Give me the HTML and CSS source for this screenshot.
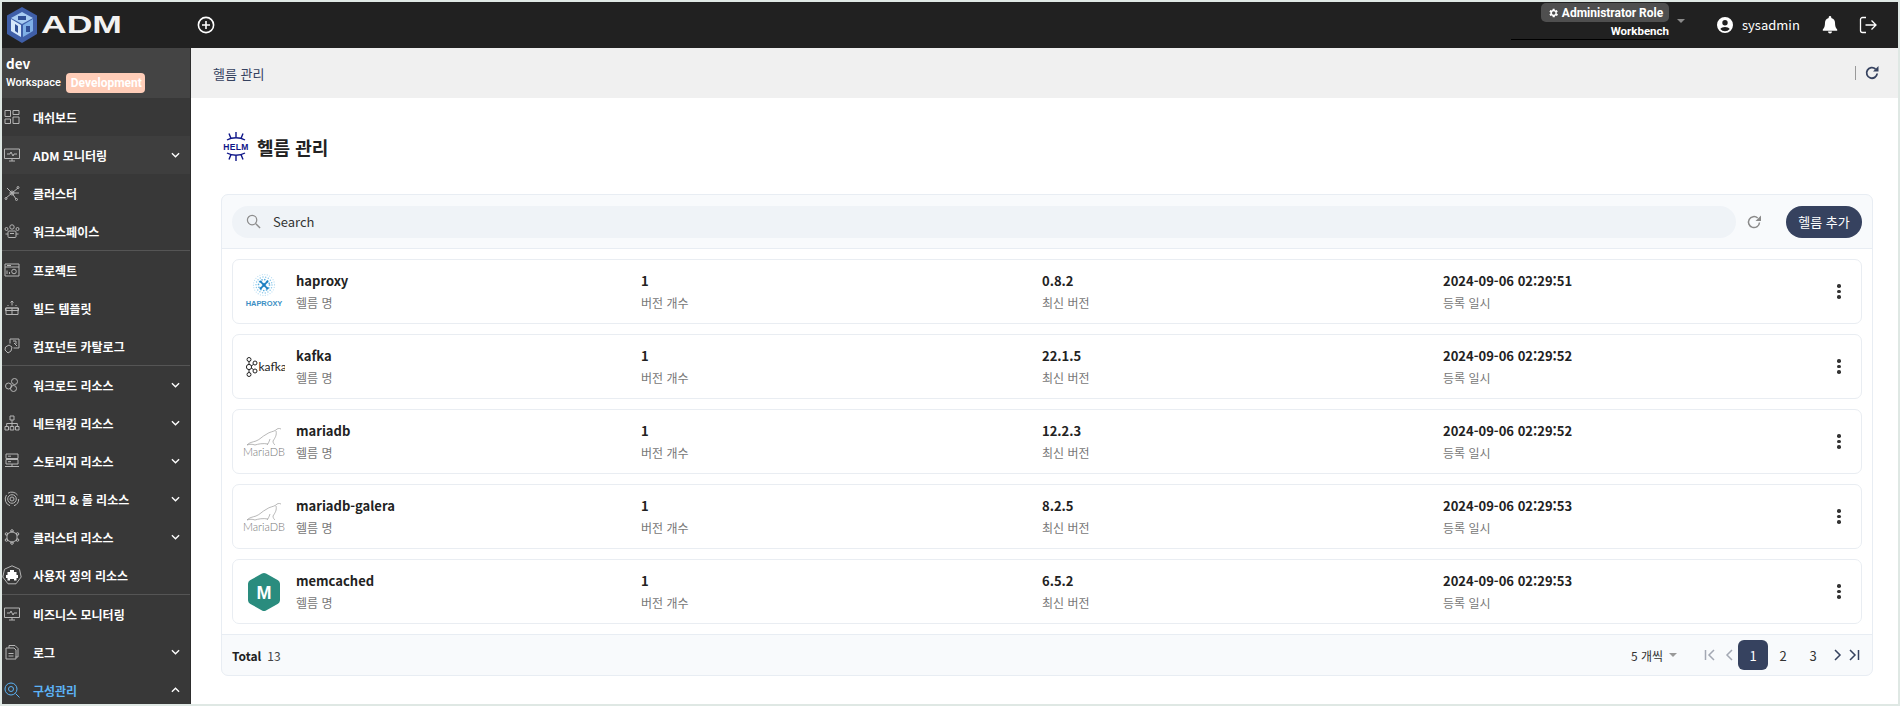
FILE: index.html
```html
<!DOCTYPE html>
<html lang="ko">
<head>
<meta charset="utf-8">
<title>헬름 관리</title>
<link rel="stylesheet" href="styles.css">
</head>
<body>
<div class="app">
  <header class="topbar">
    <div class="brand">
      <svg class="brand-hex" viewBox="0 0 32 36" width="32" height="36">
        <polygon points="16,0 31,8.5 31,27 16,36 1,27 1,8.5" fill="#3f5fa8"/>
        <polygon points="16,5 27,11 16,17 5,11" fill="#a9cdf2"/>
        <polygon points="5,12 15,18 15,30 5,24" fill="#d6e8fb"/>
        <polygon points="27,12 17,18 17,30 27,24" fill="#7fb0e6"/>
        <path d="M12 9h8v4h-8zM9 17v7l3 2v-7zM20 19h4v6h-4z" fill="#2f4f96"/>
      </svg>
      <svg class="brand-word" viewBox="0 0 82 20" width="82" height="20"><text x="0" y="17.5" textLength="81" lengthAdjust="spacingAndGlyphs" class="brand-text">ADM</text></svg>
    </div>
    <svg class="plus" viewBox="0 0 18 18" width="18" height="18"><circle cx="9" cy="9" r="7.6" fill="none" stroke="#fff" stroke-width="1.6"/><path d="M9 5v8M5 9h8" stroke="#fff" stroke-width="1.6"/></svg>
    <div class="top-right">
      <div class="role">
        <div class="role-pill">
          <svg viewBox="0 0 24 24" width="12" height="12"><path fill="#fff" d="M19.4 13a7.5 7.5 0 0 0 0-2l2.1-1.6-2-3.4-2.5 1a7.400 7.400 0 0 0-1.700-1L15.400 3.400h-4l-.4 2.600a7.400 7.400 0 0 0-1.700 1l-2.500-1-2 3.400L6.900 11a7.500 7.500 0 0 0 0 2l-2.100 1.600 2 3.400 2.500-1a7.400 7.400 0 0 0 1.700 1l.4 2.600h4l.4-2.600a7.400 7.400 0 0 0 1.700-1l2.500 1 2-3.400zM13.400 15.500a3.500 3.500 0 1 1 0-7 3.500 3.500 0 0 1 0 7z"/></svg>
          <span>Administrator Role</span>
        </div>
        <div class="role-name">Workbench</div>
      </div>
      <span class="role-caret"></span>
      <svg class="user-ico" viewBox="0 0 16 16" width="16" height="16"><path fill="#fff" fill-rule="evenodd" d="M8 0a8 8 0 1 0 0 16A8 8 0 0 0 8 0zm0 3a2.700 2.700 0 1 1 0 5.400A2.700 2.700 0 0 1 8 3zm0 11.200a6.200 6.200 0 0 1-4.700-2.200C3.900 10.700 6 10 8 10s4.100.7 4.700 2a6.200 6.200 0 0 1-4.700 2.200z"/></svg>
      <span class="user-name">sysadmin</span>
      <svg class="bell" viewBox="0 0 16 18" width="16" height="18"><path fill="#fff" d="M8 0a1.300 1.300 0 0 0-1.300 1.300v.6A5 5 0 0 0 3 6.800c0 3.600-.8 5.300-2.200 6.700v1.300h14.400v-1.300C13.800 12.100 13 10.400 13 6.800a5 5 0 0 0-3.700-4.900v-.6A1.300 1.300 0 0 0 8 0zM6 15.600a2 2 0 0 0 4 0z"/></svg>
      <svg class="logout" viewBox="0 0 20 20" width="20" height="20"><path d="M8 2.500H4.500a2 2 0 0 0-2 2v11a2 2 0 0 0 2 2H8M7.500 10H18M13.500 5.500 18 10l-4.500 4.500" fill="none" stroke="#fff" stroke-width="1.300"/></svg>
    </div>
  </header>

  <div class="body">
    <aside class="sidebar">
      <div class="workspace">
        <div class="ws-name">dev</div>
        <div class="ws-line"><span>Workspace</span><span class="ws-badge">Development</span></div>
      </div>
      <nav class="nav">
        <a class="nav-item"><svg class="nav-ico" viewBox="0 0 16 16"><path d="M1 1.500h5.500v6H1zM1 10h5.500v4.500H1zM9 1.500h6v4H9zM9 8h6v6.500H9z"/></svg><span>대쉬보드</span></a>
        <a class="nav-item is-open"><svg class="nav-ico" viewBox="0 0 16 16"><path d="M.5 2h15v9.500H.5zM5 14h6M8 11.500V14M3 7h3l1-2 2 4 1-2h3"/></svg><span>ADM 모니터링</span><svg class="chev" viewBox="0 0 10 6"><path d="M1 1l4 4 4-4"/></svg></a>
        <a class="nav-item"><svg class="nav-ico" viewBox="0 0 16 16"><path d="M8 8 3 3M8 8l6-5M8 8 2 13M8 8l4 6M8 8h7"/><circle cx="8" cy="8" r="2"/><circle cx="14" cy="2.500" r="1"/><circle cx="2" cy="13.500" r="1"/><circle cx="12.500" cy="14.500" r="1"/></svg><span>클러스터</span></a>
        <a class="nav-item"><svg class="nav-ico" viewBox="0 0 16 16"><rect x="4" y="8" width="8" height="6.500" rx="1"/><circle cx="8" cy="4" r="2.200"/><circle cx="2.500" cy="6" r="1.500"/><circle cx="13.500" cy="6" r="1.500"/><path d="M4 11H1.500M12 11h2.500M6 10.500h4"/></svg><span>워크스페이스</span></a>
        <div class="nav-sep"></div>
        <a class="nav-item"><svg class="nav-ico" viewBox="0 0 16 16"><path d="M1 2h14v12H1zM1 5h14M3 12V8.500M5.500 12V10"/><circle cx="10" cy="9.500" r="2.300"/><path d="M3 3.500h4"/></svg><span>프로젝트</span></a>
        <a class="nav-item"><svg class="nav-ico" viewBox="0 0 16 16"><path d="M2 8h12v6.500H2zM1.500 8h13v2.500h-13zM8 8v6.500M8 1v4.500M6.500 2.500 8 1l1.500 1.500M4 5v1M12 5v1"/></svg><span>빌드 템플릿</span></a>
        <a class="nav-item"><svg class="nav-ico" viewBox="0 0 16 16"><path d="M6 1h9v9H9.500M6 1v4.500M1.500 9 5 7l3 2-1 4-3 2-3-3zM9 3h3v3"/><path d="M10 5l3 3"/></svg><span>컴포넌트 카탈로그</span></a>
        <div class="nav-sep"></div>
        <a class="nav-item"><svg class="nav-ico" viewBox="0 0 16 16"><circle cx="10.500" cy="4.500" r="3"/><circle cx="4.500" cy="9" r="3"/><circle cx="9.500" cy="11.500" r="3"/></svg><span>워크로드 리소스</span><svg class="chev" viewBox="0 0 10 6"><path d="M1 1l4 4 4-4"/></svg></a>
        <a class="nav-item"><svg class="nav-ico" viewBox="0 0 16 16"><path d="M6 1h4v4H6zM1 11.500h3.500V15H1zM6.200 11.500h3.600V15H6.200zM11.500 11.500H15V15h-3.500zM8 5v6.500M2.700 11.500V8.500h10.600v3"/></svg><span>네트워킹 리소스</span><svg class="chev" viewBox="0 0 10 6"><path d="M1 1l4 4 4-4"/></svg></a>
        <a class="nav-item"><svg class="nav-ico" viewBox="0 0 16 16"><path d="M2 1h12v4.500H2zM2 6.500h12V11H2zM8 11v2.500M1 13.500h14M4 3.200h3M4 8.700h3"/></svg><span>스토리지 리소스</span><svg class="chev" viewBox="0 0 10 6"><path d="M1 1l4 4 4-4"/></svg></a>
        <a class="nav-item"><svg class="nav-ico" viewBox="0 0 16 16"><circle cx="8" cy="8" r="2"/><circle cx="8" cy="8" r="4.300"/><path d="M2.500 4A7 7 0 0 0 6 14.700M13.500 4A7 7 0 0 0 4 2.200M14.700 8A7 7 0 0 1 10 14.700"/></svg><span>컨피그 &amp; 롤 리소스</span><svg class="chev" viewBox="0 0 10 6"><path d="M1 1l4 4 4-4"/></svg></a>
        <a class="nav-item"><svg class="nav-ico" viewBox="0 0 16 16"><path d="M8 2.500 13 5v6l-5 2.500L3 11V5z"/><circle cx="8" cy="2" r="1.300"/><circle cx="13.500" cy="5" r="1.300"/><circle cx="13.500" cy="11" r="1.300"/><circle cx="8" cy="14" r="1.300"/><circle cx="2.500" cy="11" r="1.300"/><circle cx="2.500" cy="5" r="1.300"/></svg><span>클러스터 리소스</span><svg class="chev" viewBox="0 0 10 6"><path d="M1 1l4 4 4-4"/></svg></a>
        <a class="nav-item"><svg class="nav-ico nav-ico-lg" viewBox="0 0 20 20"><path d="M10 .8 17.500 4.200 19.200 12 14 18.800H6L.8 12 2.500 4.200z"/><path class="solid" d="M8 5h4v2h2.500v3H16v3h-1.500v2.500H12V14H8v1.500H5.500V13H4v-3h1.500V7H8z"/></svg><span>사용자 정의 리소스</span></a>
        <div class="nav-sep"></div>
        <a class="nav-item"><svg class="nav-ico" viewBox="0 0 16 16"><path d="M.5 2h15v9.500H.5zM5 14h6M8 11.500V14M3 7h3l1-2 2 4 1-2h3"/></svg><span>비즈니스 모니터링</span></a>
        <a class="nav-item"><svg class="nav-ico" viewBox="0 0 16 16"><path d="M5 4V1.500h6L14 4.500V13h-2.500M2 4h8l2 2v9H2zM4.500 9.500h5M4.500 12h5"/></svg><span>로그</span><svg class="chev" viewBox="0 0 10 6"><path d="M1 1l4 4 4-4"/></svg></a>
        <a class="nav-item is-active"><svg class="nav-ico" viewBox="0 0 16 16"><circle cx="7" cy="7" r="6"/><circle cx="7" cy="7" r="2.500"/><path d="m11.500 11.500 4 4"/></svg><span>구성관리</span><svg class="chev" viewBox="0 0 10 6"><path d="M1 5l4-4 4 4"/></svg></a>
      </nav>
    </aside>

    <main class="main">
      <div class="subbar">
        <span class="crumb">헬름 관리</span>
        <div class="subbar-actions">
          <span class="vline"></span>
          <svg class="reload-dark" viewBox="0 0 16 16" width="16" height="16"><path d="M13.200 8.500A5.300 5.300 0 1 1 11.500 4" fill="none" stroke="#36425f" stroke-width="1.800"/><path d="M14.500 1v5.500H9z" fill="#36425f"/></svg>
        </div>
      </div>

      <div class="page">
        <div class="title-row">
          <svg class="helm" viewBox="0 0 28 31" width="28" height="31">
            <g fill="none" stroke="#0f1689" stroke-width="1.400"><path d="M5 9c5-3 13-3 18 0M14 1v5M7 2.500l2 5M21 2.500l-2 5M5 22c5 3 13 3 18 0M14 25v5M7 28.500l2-5M21 28.500l-2-5"/></g>
            <text x="14" y="18.800" text-anchor="middle" class="helm-text">HELM</text>
          </svg>
          <h1 class="title">헬름 관리</h1>
        </div>

        <section class="card">
          <div class="toolbar">
            <div class="search">
              <svg viewBox="0 0 16 16" width="15" height="15"><circle cx="6.500" cy="6.500" r="5" fill="none" stroke="#8d8d8d" stroke-width="1.300"/><path d="m10.500 10.500 4.500 4.500" stroke="#8d8d8d" stroke-width="1.500"/></svg>
              <span>Search</span>
            </div>
            <svg class="reload" viewBox="0 0 16 16" width="16" height="16"><path d="M13.500 8.500A5.500 5.500 0 1 1 11.700 4" fill="none" stroke="#8a8a8a" stroke-width="1.500"/><path d="M15 1.500v5.500H9.500z" fill="#8a8a8a"/></svg>
            <button class="btn-add">헬름 추가</button>
          </div>

          <div class="list">
            <article class="row">
              <div class="cell cell-name">
                <svg class="logo" viewBox="0 0 42 42" width="42" height="42">
                  <g fill="none" stroke-linecap="round">
                    <circle cx="21" cy="14" r="10.500" stroke="#bfe0f3" stroke-width="1.300" stroke-dasharray="0 2.500"/>
                    <circle cx="21" cy="14" r="8" stroke="#8cc8ea" stroke-width="1.500" stroke-dasharray="0 2.800"/>
                    <circle cx="21" cy="14" r="5.500" stroke="#5eb0e0" stroke-width="1.700" stroke-dasharray="0 2.900"/>
                    <path d="m17.500 10.500 7 7M24.500 10.500l-7 7" stroke="#1c7fc1" stroke-width="2" stroke-dasharray="1.500 1.300"/>
                  </g>
                  <text x="21" y="35" text-anchor="middle" class="logo-ha">HAPROXY</text>
                </svg>
                <div class="stack"><strong>haproxy</strong><span>헬름 명</span></div>
              </div>
              <div class="cell"><div class="stack"><strong>1</strong><span>버전 개수</span></div></div>
              <div class="cell"><div class="stack"><strong>0.8.2</strong><span>최신 버전</span></div></div>
              <div class="cell"><div class="stack"><strong>2024-09-06 02:29:51</strong><span>등록 일시</span></div></div>
              <span class="kebab"><i></i><i></i><i></i></span>
            </article>
            <article class="row">
              <div class="cell cell-name">
                <svg class="logo" viewBox="0 0 42 42" width="42" height="42">
                  <g fill="none" stroke="#222" stroke-width="1"><circle cx="6" cy="21" r="2.600"/><circle cx="6" cy="13.500" r="2"/><circle cx="6" cy="28.500" r="2"/><circle cx="12" cy="17" r="2"/><circle cx="12" cy="25" r="2"/><path d="M6 15.500v3M6 23.600v3M8.200 20l2.200-1.500M8.200 22l2.200 1.500"/></g>
                  <text x="15.500" y="25" class="logo-kafka">kafka</text>
                </svg>
                <div class="stack"><strong>kafka</strong><span>헬름 명</span></div>
              </div>
              <div class="cell"><div class="stack"><strong>1</strong><span>버전 개수</span></div></div>
              <div class="cell"><div class="stack"><strong>22.1.5</strong><span>최신 버전</span></div></div>
              <div class="cell"><div class="stack"><strong>2024-09-06 02:29:52</strong><span>등록 일시</span></div></div>
              <span class="kebab"><i></i><i></i><i></i></span>
            </article>
            <article class="row">
              <div class="cell cell-name">
                <svg class="logo" viewBox="0 0 42 42" width="42" height="42">
                  <path class="seal" d="M38 8c-2-1-4-.5-5 1-3 2-6 1.500-10 4.500-4 2-6 5-10 6.500-3 1-7 1.500-9 4 3-1 5-1 8 0 3-1 8-2 13-1M33 10c1 4-1 7-3 10 0 2 1 3 2 4M27 18c-1 3-2 5-3 6"/>
                  <text x="21" y="35" text-anchor="middle" class="logo-maria">MariaDB</text>
                </svg>
                <div class="stack"><strong>mariadb</strong><span>헬름 명</span></div>
              </div>
              <div class="cell"><div class="stack"><strong>1</strong><span>버전 개수</span></div></div>
              <div class="cell"><div class="stack"><strong>12.2.3</strong><span>최신 버전</span></div></div>
              <div class="cell"><div class="stack"><strong>2024-09-06 02:29:52</strong><span>등록 일시</span></div></div>
              <span class="kebab"><i></i><i></i><i></i></span>
            </article>
            <article class="row">
              <div class="cell cell-name">
                <svg class="logo" viewBox="0 0 42 42" width="42" height="42">
                  <path class="seal" d="M38 8c-2-1-4-.5-5 1-3 2-6 1.500-10 4.500-4 2-6 5-10 6.500-3 1-7 1.500-9 4 3-1 5-1 8 0 3-1 8-2 13-1M33 10c1 4-1 7-3 10 0 2 1 3 2 4M27 18c-1 3-2 5-3 6"/>
                  <text x="21" y="35" text-anchor="middle" class="logo-maria">MariaDB</text>
                </svg>
                <div class="stack"><strong>mariadb-galera</strong><span>헬름 명</span></div>
              </div>
              <div class="cell"><div class="stack"><strong>1</strong><span>버전 개수</span></div></div>
              <div class="cell"><div class="stack"><strong>8.2.5</strong><span>최신 버전</span></div></div>
              <div class="cell"><div class="stack"><strong>2024-09-06 02:29:53</strong><span>등록 일시</span></div></div>
              <span class="kebab"><i></i><i></i><i></i></span>
            </article>
            <article class="row">
              <div class="cell cell-name">
                <svg class="logo" viewBox="0 0 42 42" width="42" height="42">
                  <path d="M19 2.500a4 4 0 0 1 4 0l12 6.800a4 4 0 0 1 2 3.400v16.600a4 4 0 0 1-2 3.400l-12 6.800a4 4 0 0 1-4 0L7 32.700a4 4 0 0 1-2-3.400V12.700a4 4 0 0 1 2-3.400z" fill="#2a8c7e"/>
                  <text x="21" y="28" text-anchor="middle" class="logo-mem">M</text>
                </svg>
                <div class="stack"><strong>memcached</strong><span>헬름 명</span></div>
              </div>
              <div class="cell"><div class="stack"><strong>1</strong><span>버전 개수</span></div></div>
              <div class="cell"><div class="stack"><strong>6.5.2</strong><span>최신 버전</span></div></div>
              <div class="cell"><div class="stack"><strong>2024-09-06 02:29:53</strong><span>등록 일시</span></div></div>
              <span class="kebab"><i></i><i></i><i></i></span>
            </article>
          </div>

          <footer class="card-foot">
            <div class="total"><strong>Total</strong><span>13</span></div>
            <div class="pager">
              <div class="page-size"><span>5 개씩</span><i class="size-caret"></i></div>
              <svg class="pg-ico is-off first" viewBox="0 0 12 12"><path d="M1.500 1v10M10 1 5 6l5 5"/></svg>
              <svg class="pg-ico is-off" viewBox="0 0 12 12"><path d="M8 1 3 6l5 5"/></svg>
              <span class="pg is-current">1</span>
              <span class="pg">2</span>
              <span class="pg">3</span>
              <svg class="pg-ico" viewBox="0 0 12 12"><path d="m4 1 5 5-5 5"/></svg>
              <svg class="pg-ico" viewBox="0 0 12 12"><path d="M10.500 1v10M2 1l5 5-5 5"/></svg>
            </div>
          </footer>
        </section>
      </div>
    </main>
  </div>
</div>
</body>
</html>
```
FILE: styles.css
```css
* { box-sizing: border-box; }
html, body { margin: 0; height: 100%; overflow: hidden; }
body {
  background: #dfe8e4;
  padding: 2px;
  font-family: "Noto Sans CJK KR", "Noto Sans", sans-serif;
  font-size: 12px;
  color: #222;
}
.app { height: 702px; display: flex; flex-direction: column; overflow: hidden; background: #fff; }

/* top bar */
.topbar { flex: 0 0 46px; background: #212121; display: flex; align-items: center; color: #fff; }
.brand { width: 195px; padding-left: 4px; display: flex; align-items: center; gap: 3px; }
.brand-hex { flex: none; margin-top: -1px; }
.brand-word { flex: none; }
.brand-text { font: 700 23px "Liberation Sans", sans-serif; fill: #f2f2f2; }
.plus { flex: none; margin-left: 0; }
.top-right { margin-left: auto; display: flex; align-items: center; height: 100%; }
.role { width: 158px; height: 38px; margin-top: 0; border-bottom: 1px solid #000; display: flex; flex-direction: column; align-items: flex-end; align-self: flex-start; padding-top: 1px; }
.role-pill { height: 19px; width: 128px; background: #4f4f4f; border-radius: 5px; display: flex; align-items: center; justify-content: center; gap: 3px; font: 700 12px/1 "Roboto", "Noto Sans", sans-serif; white-space: nowrap; }
.role-name { font: 700 11.500px/1 "Roboto", sans-serif; margin-top: 4px; }
.role-caret { width: 0; height: 0; border: 4px solid transparent; border-top: 4px solid #8a8a8a; border-bottom: 0; margin-left: 8px; margin-top: -8px; margin-right: 32px; }
.user-ico { flex: none; }
.user-name { font-size: 13px; margin-left: 9px; width: 80px; margin-top: -1px; }
.bell { flex: none; }
.logout { flex: none; margin-left: 20px; margin-right: 20px; }

/* body */
.body { flex: 1; display: flex; min-height: 0; }
.sidebar { flex: 0 0 189px; background: #383838; border-right: 1px solid #2e2e2e; color: #fff; overflow: hidden; }
.workspace { height: 50px; background: #444; padding: 5px 4px 0; }
.ws-name { font-size: 13.500px; font-weight: 700; line-height: 20px; }
.ws-line { display: flex; align-items: center; gap: 5px; font-size: 11px; line-height: 20px; font-family: "Roboto", sans-serif; font-weight: 500; }
.ws-badge { background: #ffcdb8; color: #fff; font-weight: 700; font-size: 12px; padding: 0 5px; border-radius: 4px; height: 20px; width: 79px; white-space: nowrap; }
.nav-item { height: 38px; display: flex; align-items: center; position: relative; font-size: 12px; font-weight: 700; color: #fff; padding-left: 2px; }
.nav-item > span { margin-left: 13px; white-space: nowrap; }
.nav-item.is-open { background: #3e3e3e; }
.nav-item.is-active { color: #5cb3f5; }
.nav-ico { width: 16px; height: 16px; flex: none; fill: none; stroke: #b5b5b5; stroke-width: 1; }
.nav-ico-lg { width: 20px; height: 20px; margin-left: -2px; margin-right: -2px; }
.nav-ico .solid { fill: #fff; stroke: none; }
.is-active .nav-ico { stroke: #5cb3f5; }
.chev { width: 9px; height: 6px; position: absolute; right: 10px; top: 16px; fill: none; stroke: #fff; stroke-width: 1.500; }
.nav-sep { height: 1px; background: #555; }

/* main */
.main { flex: 1; min-width: 0; display: flex; flex-direction: column; background: #fff; }
.subbar { flex: 0 0 50px; background: #f0f0f0; display: flex; align-items: center; justify-content: space-between; padding: 0 18px 0 22px; }
.crumb { font-size: 13px; color: #36425f; }
.subbar-actions { display: flex; align-items: center; gap: 8px; }
.vline { width: 1px; height: 14px; background: #999; }

.page { flex: 1; padding: 33px 25px 0 30px; }
.title-row { height: 31px; margin-bottom: 32px; display: flex; align-items: center; gap: 7px; padding-left: 1px; }
.helm { flex: none; }
.helm-text { font: 700 8.500px "Liberation Sans", sans-serif; fill: #0f1689; letter-spacing: .4px; }
.title { margin: 0; font-size: 18px; font-weight: 700; color: #222; line-height: 1; }

.card { border: 1px solid #e8edf3; border-radius: 7px; background: #f8fafc; height: 482px; display: flex; flex-direction: column; overflow: hidden; }
.toolbar { flex: 0 0 54px; display: flex; align-items: center; padding: 0 10px; border-bottom: 1px solid #e8edf3; }
.search { flex: 1; height: 32px; background: #eff3f7; border-radius: 16px; display: flex; align-items: center; padding-left: 14px; gap: 12px; font-size: 13px; color: #333; }
.reload { flex: none; margin: 0 24px 0 10px; }
.btn-add { flex: none; width: 76px; height: 32px; border: 0; border-radius: 16px; background: #36425f; color: #fff; font: 13px "Noto Sans CJK KR", sans-serif; padding: 0; white-space: nowrap; }

.list { flex: 0 0 385px; background: #fff; padding: 10px 10px; display: flex; flex-direction: column; gap: 10px; border-bottom: 1px solid #e8edf3; }
.row { flex: 0 0 65px; border: 1px solid #e9edf2; border-radius: 7px; background: #fff; display: grid; grid-template-columns: 408px 401px 401px 1fr 30px; align-items: center; }
.cell { display: flex; align-items: center; min-width: 0; }
.cell-name { padding-left: 10px; gap: 11px; }
.logo { flex: none; }
.stack { display: flex; flex-direction: column; gap: 3px; }
.stack strong { font-size: 13px; font-weight: 700; line-height: 19px; color: #222; white-space: nowrap; }
.stack span { font-size: 12px; line-height: 19px; color: #777; }
.kebab { display: flex; flex-direction: column; align-items: center; gap: 2px; width: 16px; }
.kebab i { width: 3.500px; height: 3.500px; border-radius: 50%; background: #333; display: block; }

.logo-ha { font: 700 7.500px "Liberation Sans", sans-serif; fill: #3d8fc4; letter-spacing: -.1px; }
.logo-kafka { font: 400 12px "Lato", sans-serif; fill: #222; }
.logo-maria { font: 300 11px "Lato", sans-serif; fill: #777; }
.logo-mem { font: 700 18px "Liberation Sans", sans-serif; fill: #fff; }
.seal { fill: none; stroke: #999; stroke-width: .7; }

.card-foot { flex: 1; display: flex; align-items: center; justify-content: space-between; padding: 0 10px; }
.total { display: flex; gap: 6px; font-size: 12px; }
.total span { color: #444; }
.pager { display: flex; align-items: center; }
.page-size { display: flex; align-items: center; gap: 6px; font-size: 12px; color: #333; margin-right: 24px; }
.size-caret { width: 0; height: 0; border: 4px solid transparent; border-top: 4px solid #999; border-bottom: 0; }
.pg { width: 30px; height: 30px; border-radius: 6px; display: flex; align-items: center; justify-content: center; font-size: 13px; color: #333; }
.pg.is-current { background: #36425f; color: #fff; }
.pg-ico { width: 12px; height: 12px; fill: none; stroke: #36425f; stroke-width: 1.500; flex: none; margin: 0 2px 0 3px; }
.pg-ico.is-off { stroke: #a3a8b3; }
.first { margin-right: 5px; }
```
